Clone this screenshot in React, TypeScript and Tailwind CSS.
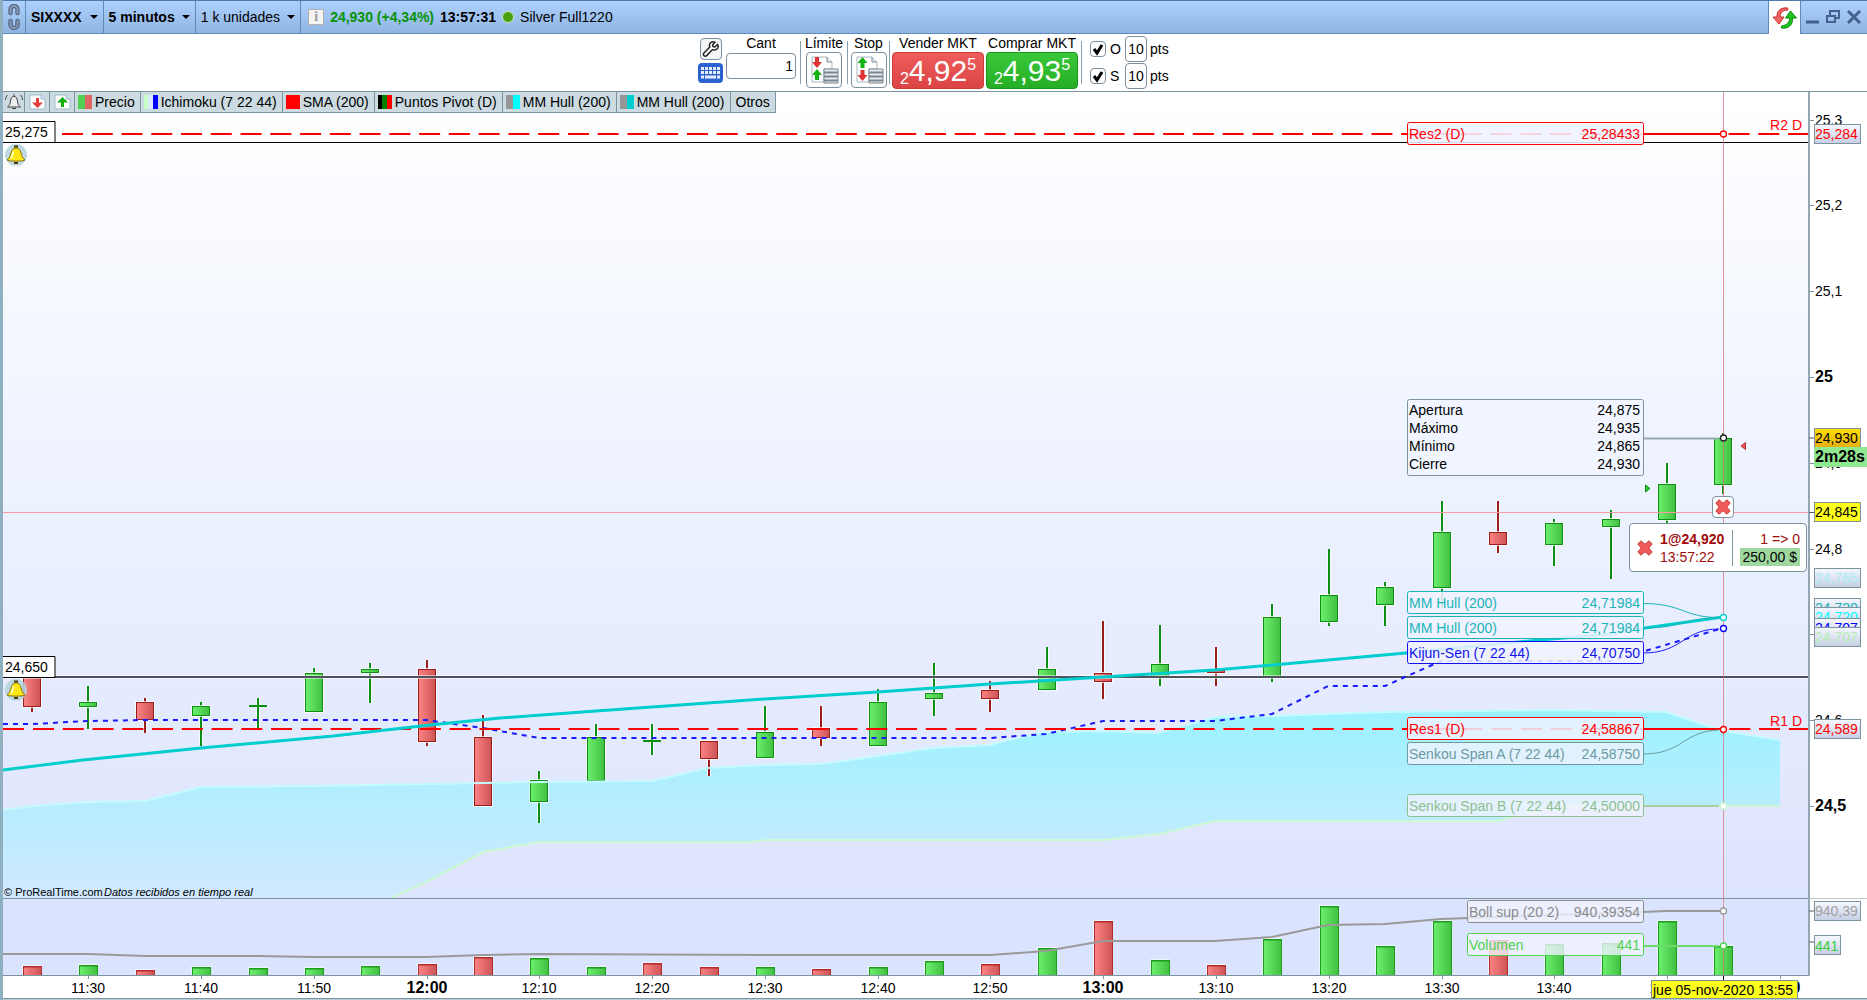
import React, { useState } from 'react';

type Candle = [up: boolean, high: number, top: number, bottom: number, low: number, volume: number];

const FIRST_X = 32;
const STEP = 56.38;
const RIGHT = 1809;
const CURSOR_X = 1723.5;

const xAt = (i: number) => Math.round(FIRST_X + STEP * i);
const priceY = (price: number) => Math.round(377 + (25 - price) * 858);

const candles: Candle[] = [
  [false, 672, 676, 707, 712, 966],
  [true, 686, 702, 707, 729, 965],
  [false, 698, 702, 720, 733, 970],
  [true, 702, 706, 716, 746, 967],
  [true, 698, 706, 706, 729, 968],
  [true, 668, 673, 712, 712, 968],
  [true, 663, 669, 673, 703, 966],
  [false, 660, 669, 742, 746, 964],
  [false, 715, 737, 806, 806, 957],
  [true, 771, 780, 802, 823, 958],
  [true, 724, 737, 781, 781, 967],
  [true, 724, 741, 741, 755, 963],
  [false, 741, 741, 759, 776, 967],
  [true, 706, 732, 758, 758, 967],
  [false, 706, 728, 738, 746, 969],
  [true, 689, 702, 746, 746, 967],
  [true, 663, 693, 699, 716, 961],
  [false, 681, 690, 699, 712, 964],
  [true, 647, 669, 690, 690, 948],
  [false, 621, 673, 682, 699, 921],
  [true, 625, 664, 677, 686, 960],
  [false, 647, 670, 673, 686, 965],
  [true, 604, 617, 677, 682, 939],
  [true, 549, 595, 622, 626, 906],
  [true, 582, 587, 605, 626, 946],
  [true, 501, 532, 588, 608, 921],
  [false, 501, 532, 545, 553, 940],
  [true, 519, 523, 545, 566, 944],
  [true, 510, 519, 527, 579, 943],
  [true, 463, 484, 520, 524, 921],
  [true, 433, 438, 485, 494, 946],
];

// volume bars that closed the other way round from their candle
const redVolumes = [11];

const spanA =
  '3,810 32,806 88,802 145,801 201,787 313,786 426,784 539,782 652,781 708,768 765,765 821,764 878,756 933,748 990,745 1000,742 1046,732 1103,731 1159,733 1215,717 1272,716 1385,712 1553,710 1666,712 1723,731 1780,740';
const spanB = '391,898 426,882 483,852 539,842 752,842 765,840 1103,840 1159,834 1215,821 1498,821 1553,806 1780,806';
const kijun =
  '3,724 32,724 88,721 145,720 426,720 483,728 539,738 990,738 1046,734 1103,721 1215,721 1272,714 1328,686 1385,686 1441,661 1610,661 1645,651 1723,628';
const hull =
  '3,770 83,760 201,748 333,736 430,725 500,718 596,711 765,699 878,692 990,684 1103,677 1215,670 1328,660 1406,653 1540,640 1610,634 1645,628 1723,617';
const bollinger =
  '3,954 88,954 145,956 258,956 313,957 426,957 483,955 539,954 765,955 990,955 1046,951 1103,941 1215,941 1272,937 1328,925 1385,924 1441,919 1553,915 1643,912 1666,911 1723,911';

const dataLabels = [
  { name: 'Res2 (D)', value: '25,28433', x: 1407, y: 122, color: '#ff0000', opacity: 0.88 },
  { name: 'MM Hull (200)', value: '24,71984', x: 1407, y: 591, color: '#1bb4b8', opacity: 0.88 },
  { name: 'MM Hull (200)', value: '24,71984', x: 1407, y: 616, color: '#1bb4b8', opacity: 0.88 },
  { name: 'Kijun-Sen (7 22 44)', value: '24,70750', x: 1407, y: 641, color: '#1212f0', opacity: 0.88 },
  { name: 'Res1 (D)', value: '24,58867', x: 1407, y: 717, color: '#ff0000', opacity: 0.85 },
  { name: 'Senkou Span A (7 22 44)', value: '24,58750', x: 1407, y: 742, color: '#6c9a9f', opacity: 0.8 },
  { name: 'Senkou Span B (7 22 44)', value: '24,50000', x: 1407, y: 794, color: '#8fbf8f', opacity: 0.8 },
  { name: 'Boll sup (20 2)', value: '940,39354', x: 1467, y: 900, color: '#8a8a8a', opacity: 0.8 },
  { name: 'Volumen', value: '441', x: 1467, y: 933, color: '#50d250', opacity: 0.8 },
];

const ohlc = [
  ['Apertura', '24,875'],
  ['Máximo', '24,935'],
  ['Mínimo', '24,865'],
  ['Cierre', '24,930'],
];

const priceTicks = [25.3, 25.2, 25.1, 25, 24.9, 24.8, 24.7, 24.6, 24.5];

const priceTags = [
  { text: '25,284', y: 124, color: '#ff0000', fill: 'url(#tag)' },
  { text: '24,930', y: 428, color: '#000', fill: 'url(#tagOrange)' },
  { text: '24,845', y: 502, color: '#000', fill: '#ffff1e' },
  { text: '24,765', y: 568, color: '#a9ecf5', fill: 'url(#tag)' },
  { text: '24,720', y: 598, color: '#1bb4b8', fill: 'url(#tag)' },
  { text: '24,720', y: 607, color: '#00ffff', fill: 'url(#tag)' },
  { text: '24,707', y: 618, color: '#0000ff', fill: 'url(#tag)' },
  { text: '24,707', y: 627, color: '#b4efb4', fill: 'url(#tag)' },
  { text: '24,589', y: 719, color: '#ff0000', fill: 'url(#tag)' },
  { text: '940,39', y: 901, color: '#a0a0a0', fill: 'url(#tag)' },
];

const timeTicks = [
  '11:30', '11:40', '11:50', '12:00', '12:10', '12:20', '12:30', '12:40',
  '12:50', '13:00', '13:10', '13:20', '13:30', '13:40', '13:50', '14:00',
];

const indicators = [
  { name: 'Precio', colors: ['bg-[#50d050]', 'bg-[#e06464]'] },
  { name: 'Ichimoku (7 22 44)', colors: ['bg-[#c8ffc8]', 'bg-[#dceaff]', 'bg-[#0000ff]'] },
  { name: 'SMA (200)', colors: ['bg-[#ff0000]'] },
  { name: 'Puntos Pivot (D)', colors: ['bg-black', 'bg-[#008000]', 'bg-[#ff0000]'] },
  { name: 'MM Hull (200)', colors: ['bg-[#969696]', 'bg-[#00ffff]'] },
  { name: 'MM Hull (200)', colors: ['bg-[#969696]', 'bg-[#00cdcd]'] },
];

const Caret = () => <span className="h-0 w-0 border-x-4 border-t-4 border-x-transparent border-t-black" />;

const Cross: React.FC<{ className?: string }> = ({ className }) => (
  <svg viewBox="0 0 16 16" className={className} aria-hidden="true">
    <path
      d="M4 .8 8 4.2 12 .8 15.2 4 11.8 8l3.4 4-3.2 3.2L8 11.8l-4 3.4L.8 12l3.4-4L.8 4z"
      fill="#f05a5a"
      stroke="#c83c3c"
    />
  </svg>
);

const TitleBar: React.FC = () => (
  <header className="flex h-[34px] items-stretch border-t border-b border-t-[#4f78ae] border-b-[#5f88bc] bg-gradient-to-b from-[#aed1ff] to-[#90b5e2]">
    <button type="button" aria-label="Vincular" className="flex w-[23px] items-center justify-center border-r border-[#5f88bc]">
      <svg width="14" height="26" viewBox="0 0 14 26" fill="none">
        <path d="M3.500 9V5.500a3.500 3.500 0 0 1 7 0V9M3.500 17v3.500a3.500 3.500 0 0 0 7 0V17" stroke="#566a86" strokeWidth="4.500" strokeLinecap="round" />
        <path d="M3.500 9V5.500a3.500 3.500 0 0 1 7 0V9M3.500 17v3.500a3.500 3.500 0 0 0 7 0V17" stroke="#8398b4" strokeWidth="2" strokeLinecap="round" />
        <path d="M7 6v4M7 16v4" stroke="#a9c4ea" strokeWidth="1" />
      </svg>
    </button>
    <button type="button" className="flex items-center gap-2 border-r border-[#5f88bc] px-[5px] font-bold">
      SIXXXX
      <Caret />
    </button>
    <button type="button" className="flex items-center gap-[7px] border-r border-[#5f88bc] px-[5px] font-bold">
      5 minutos
      <Caret />
    </button>
    <button type="button" className="flex items-center gap-[7px] border-r border-[#5f88bc] px-[5px]">
      1 k unidades
      <Caret />
    </button>
    <div className="flex flex-1 items-center gap-[6px] pl-[7px]">
      <span className="flex h-4 w-4 items-center justify-center border border-[#b0b0b0] bg-[#f3f3f3] font-[Liberation_Serif,serif] text-sm font-bold text-[#9a9a9a]">
        i
      </span>
      <span className="font-bold text-[#089408]">24,930 (+4,34%)</span>
      <span className="font-bold">13:57:31</span>
      <span className="h-3 w-3 rounded-full border border-[#cde9b4] bg-[#46a010]" />
      <span>Silver Full1220</span>
    </div>
    <button type="button" aria-label="Cambiar" className="-mb-px flex w-[33px] items-center justify-center border-x border-[#5f88bc] bg-white">
      <svg width="26" height="24" viewBox="0 0 26 24">
        <path d="M15.500 2C9 1 4.500 5 5 11H1l6 7 5-7H8.500C8 7 10 4 16 4z" fill="#f26464" stroke="#c83232" />
        <path d="M9.500 22c7 1 11.500-3 11-10h4l-6-7-5 7h4c.3 4-2 7-8 8z" fill="#1fc41f" stroke="#0c8a0c" />
      </svg>
    </button>
    <div className="flex w-[66px] items-center gap-[7px] pl-[5px] text-[#42618c]">
      <button type="button" aria-label="Minimizar">
        <svg width="13" height="14"><path d="M0 12h13" stroke="currentColor" strokeWidth="3" /></svg>
      </button>
      <button type="button" aria-label="Restaurar">
        <svg width="14" height="14" fill="none" stroke="currentColor">
          <path d="M4 5V1h9v7h-3" strokeWidth="2" />
          <path d="M1 6h8v6H1z" strokeWidth="2" />
        </svg>
      </button>
      <button type="button" aria-label="Cerrar">
        <svg width="14" height="14"><path d="m1 1 12 12M13 1 1 13" stroke="currentColor" strokeWidth="3" /></svg>
      </button>
    </div>
  </header>
);

const Divider = () => <span className="mt-[7px] h-[43px] w-px shrink-0 bg-[#8a9eae]" />;

const OrderIcon: React.FC<{ flip?: boolean }> = ({ flip }) => (
  <svg width="32" height="32" viewBox="0 0 32 32">
    <path d="M4 3h15l5 5v7h-8v13H4z" fill="#fff" stroke="#a9b9c4" />
    <path d="M19 3v5h5" fill="#e4ebef" stroke="#7d8c96" />
    {flip ? (
      <>
        <path d="M9.500 3 4.500 9h3v5h4V9h3z" fill="#12b312" />
        <path d="M9.500 27l-5-6h3v-5h4v5h3z" fill="#e03232" />
      </>
    ) : (
      <>
        <path d="M9 14 4 8h3V3h4v5h3z" fill="#e03232" />
        <path d="M9 15l-5 6h3v5h4v-5h3z" fill="#12b312" />
      </>
    )}
    <path d="M16 15h14v14H16z" fill="#e8ecee" stroke="#77858f" />
    <path d="M16 18.500h14M16 22.500h14M16 26.500h14" stroke="#77858f" strokeWidth="2" />
  </svg>
);

const LevelRow: React.FC<{ letter: string; name: string }> = ({ letter, name }) => {
  const [checked, setChecked] = useState(true);
  return (
    <div className="flex h-[27px] items-center">
      <label className="flex w-[35px] items-center gap-1">
        <span className="relative h-4 w-4">
          <input
            type="checkbox"
            checked={checked}
            onChange={() => setChecked(!checked)}
            className="block h-4 w-4 appearance-none rounded-sm border border-[#7d8f9c] bg-white"
          />
          {checked && (
            <svg viewBox="0 0 16 16" className="pointer-events-none absolute inset-0">
              <path d="m4 8 3 4 5-8" fill="none" stroke="#000" strokeWidth="3" />
            </svg>
          )}
        </span>
        {letter}
      </label>
      <input
        aria-label={name}
        defaultValue="10"
        className="h-[26px] w-[22px] rounded-sm border border-[#7d8f9c] bg-white text-center"
      />
      <span className="ml-[3px]">pts</span>
    </div>
  );
};

const OrderToolbar: React.FC = () => (
  <div className="flex h-[57px] items-start bg-white pl-[695px] leading-4">
    <div className="mt-1 flex flex-col items-center gap-[3px]">
      <button type="button" aria-label="Configurar" className="flex h-[22px] w-[22px] items-center justify-center rounded-sm border border-[#7d8f9c] bg-[#f4f6f7]">
        <svg width="18" height="18" viewBox="0 0 18 18">
          <path
            d="M15.500 4.500 13 7l-2-.5L10.500 5 13 2.300C11 1.300 8.500 2 7.700 4c-.4 1-.3 2 .1 3L2 13c-1 1-.6 2 0 2.600.8.700 1.800.8 2.700 0l5.800-6C13 10.500 15.300 9.500 16 7.500c.3-1 .1-2.200-.5-3z"
            fill="#fff"
            stroke="#222"
            strokeWidth="1.500"
          />
        </svg>
      </button>
      <button type="button" aria-label="Teclado" className="flex h-5 w-[25px] items-center justify-center rounded-sm bg-[#2c62d0]">
        <svg width="21" height="14" viewBox="0 0 21 14" stroke="#e4edff" strokeWidth="3">
          <path d="M1 2.500h19M1 6.500h19" strokeDasharray="3 1" />
          <path d="M1 11h3M5 11h11M17 11h3" />
        </svg>
      </button>
    </div>
    <label className="ml-[3px] mt-[1px] flex w-[70px] flex-col gap-[2px] text-center">
      <span>Cant</span>
      <input defaultValue="1" className="h-[26px] w-full rounded-sm border border-[#7d8f9c] bg-white pr-[2px] text-right" />
    </label>
    <div className="ml-1 flex"><Divider /></div>
    <div className="mt-[1px] flex w-[46px] flex-col items-center gap-[1px]">
      <span>Límite</span>
      <button type="button" aria-label="Orden límite" className="flex h-9 w-9 items-center justify-center rounded-sm border border-[#7d8f9c] bg-white">
        <OrderIcon />
      </button>
    </div>
    <Divider />
    <div className="mt-[1px] flex w-[41px] flex-col items-center gap-[1px]">
      <span>Stop</span>
      <button type="button" aria-label="Orden stop" className="flex h-9 w-9 items-center justify-center rounded-sm border border-[#7d8f9c] bg-white">
        <OrderIcon flip />
      </button>
    </div>
    <Divider />
    <div className="ml-[2px] mt-[1px] flex w-[92px] flex-col gap-px text-center">
      <span>Vender MKT</span>
      <button type="button" className="flex h-[37px] items-center justify-center rounded-sm border border-[#c83c3c] bg-gradient-to-b from-[#ee5c5c] to-[#dc4444] text-white">
        <span className="mt-4 text-base">2</span>
        <span className="text-3xl">4,92</span>
        <span className="-mt-3 text-base">5</span>
      </button>
    </div>
    <div className="ml-[2px] mt-[1px] flex w-[92px] flex-col gap-px text-center">
      <span className="whitespace-nowrap">Comprar MKT</span>
      <button type="button" className="flex h-[37px] items-center justify-center rounded-sm border border-[#1c961c] bg-gradient-to-b from-[#3ac83a] to-[#25ae25] text-white">
        <span className="mt-4 text-base">2</span>
        <span className="text-3xl">4,93</span>
        <span className="-mt-3 text-base">5</span>
      </button>
    </div>
    <div className="ml-[3px] flex"><Divider /></div>
    <div className="ml-2 mt-px flex flex-col">
      <LevelRow letter="O" name="Objetivo" />
      <LevelRow letter="S" name="Stop de protección" />
    </div>
  </div>
);

const Legend: React.FC = () => (
  <div className="absolute top-0 left-0 flex h-[22px] border-y border-[#7d939e] bg-[#cbdbe1]">
    <button type="button" aria-label="Alertas" className="flex w-[22px] items-center justify-center border-r border-[#7d939e]">
      <svg width="20" height="18" viewBox="0 0 20 18" fill="none" stroke="#444">
        <path d="M3.500 14c2.500-2 2.500-3 3-6S8 3.500 10 3.500 13 5 13.500 8s.5 4 3 6z" fill="#eee" />
        <path d="M10 1v2.500M8 15.500h4M3.500 2C2 3.500 1.500 5 1.500 7M16.500 2c1.500 1.500 2 3 2 5" />
      </svg>
    </button>
    {['#e63c3c', '#0faf0f'].map((color, i) => (
      <button key={color} type="button" aria-label={i === 0 ? 'Vender' : 'Comprar'} className="flex w-[25px] items-center justify-center border-r border-[#7d939e]">
        <svg width="17" height="16" viewBox="0 0 17 16">
          <path d="M1 1h11l4 4v10H1z" fill="#fff" stroke="#9db8cc" />
          <path d="M12 1v4h4" fill="#dbe8f2" stroke="#9db8cc" />
          <path d={i === 0 ? 'M8.500 14 3 8.500h4V4h3v4.500h4z' : 'M8.500 3 3 8.500h4V13h3V8.500h4z'} fill={color} />
        </svg>
      </button>
    ))}
    {indicators.map((item, i) => (
      <button key={i} type="button" className="flex items-center gap-[3px] border-r border-[#7d939e] pr-[5px] pl-[3px]">
        <span className="flex h-[14px] w-[14px]">
          {item.colors.map((c) => (
            <span key={c} className={`flex-1 ${c}`} />
          ))}
        </span>
        <span>{item.name}</span>
      </button>
    ))}
    <button type="button" className="border-r border-[#7d939e] px-[5px]">Otros</button>
  </div>
);

const AlarmBell: React.FC<{ y: number }> = ({ y }) => (
  <g transform={`translate(16 ${y})`}>
    <circle r="11" fill="#b4d2dd" fillOpacity="0.85" />
    <path d="M-9 5C-5 2-6-1-4-4.500-3-6.500-1.500-7 0-7s3 .5 4 2.500C6-1 5 2 9 5c0 1.500-18 1.500-18 0z" fill="#ffe614" stroke="#8a7000" />
    <path d="M-2-8.500h4M-2 8h4" stroke="#4a3c00" strokeWidth="2" />
    <path d="M-2.500-3.500C-3.500 0-4 2-5 3.500" stroke="#fffbb0" strokeWidth="2" fill="none" />
  </g>
);

const Chart: React.FC = () => (
  <svg viewBox="3 91 1864 907" className="block h-auto w-full" fontSize="14" role="img" aria-label="Silver Full1220">
    <defs>
      <linearGradient id="sky" x1="0" y1="0" x2="0" y2="1">
        <stop offset="0" stopColor="#ffffff" />
        <stop offset="0.500" stopColor="#edf2ff" />
        <stop offset="1" stopColor="#dde4fd" />
      </linearGradient>
      <linearGradient id="cloud" gradientUnits="userSpaceOnUse" x1="0" y1="710" x2="0" y2="898">
        <stop offset="0" stopColor="#9cf2ff" />
        <stop offset="1" stopColor="#d0e8ff" />
      </linearGradient>
      <linearGradient id="up">
        <stop offset="0" stopColor="#6cf06c" />
        <stop offset="1" stopColor="#42bf42" />
      </linearGradient>
      <linearGradient id="down">
        <stop offset="0" stopColor="#fc8484" />
        <stop offset="1" stopColor="#cc5454" />
      </linearGradient>
      <linearGradient id="tag" x1="0" y1="0" x2="0" y2="1">
        <stop offset="0" stopColor="#f6f8ff" />
        <stop offset="1" stopColor="#c6cfe4" />
      </linearGradient>
      <linearGradient id="tagOrange" x1="0" y1="0" x2="0" y2="1">
        <stop offset="0" stopColor="#ffe000" />
        <stop offset="1" stopColor="#e8ae10" />
      </linearGradient>
    </defs>

    <rect x="2" y="91" width="1865" height="907" fill="#fff" />
    <rect x="2" y="92" width="1807" height="806" fill="url(#sky)" />
    <rect x="2" y="899" width="1807" height="76" fill="#dae4ff" />

    <polygon points={`${spanA} 1780,806 1553,806 1498,821 1215,821 1159,834 1103,840 765,840 752,842 539,842 483,852 426,882 391,898 3,898`} fill="url(#cloud)" />

    {candles.map(([up, high, top, bottom, low, volume], i) => {
      const x = xAt(i);
      const redVolume = !up || redVolumes.includes(i);
      const ink = up ? '#0a8f14' : '#9c1c1c';
      return (
        <g key={i}>
          <path d={`M${x} ${high}V${low}`} stroke="#fff" strokeOpacity="0.700" strokeWidth="4" />
          <path d={`M${x} ${high}V${low}`} stroke={ink} strokeWidth="2" />
          <rect x={x - 10} y={top - 1} width="20" height={bottom - top + 2} fill="#fff" fillOpacity="0.700" />
          {bottom === top ? (
            <path d={`M${x - 9} ${top}h18`} stroke={ink} strokeWidth="2" />
          ) : (
            <rect x={x - 8.5} y={top + 0.5} width="17" height={bottom - top - 1} fill={up ? 'url(#up)' : 'url(#down)'} stroke={ink} />
          )}
          <rect x={x - 10} y={volume - 1} width="20" height={975 - volume} fill="#fff" fillOpacity="0.600" />
          <rect
            x={x - 8.5}
            y={volume + 0.5}
            width="18"
            height={975 - volume}
            fill={redVolume ? 'url(#down)' : 'url(#up)'}
            stroke={redVolume ? '#b42d2d' : '#1b9e1b'}
          />
          <path d={`M${x - 8} ${volume + 1}h17`} stroke={redVolume ? '#b42d2d' : '#1b9e1b'} />
        </g>
      );
    })}

    <g fill="none">
      <polyline points={spanA} stroke="#c4fbff" strokeWidth="2" />
      <polyline points={spanB} stroke="#ccf9d4" strokeWidth="2" />
      <path d={`M2 142.500H${RIGHT}`} stroke="#000" />
      <path d={`M2 677H${RIGHT}`} stroke="#fff" strokeWidth="4" strokeOpacity="0.500" />
      <path d={`M2 677H${RIGHT}`} stroke="#50525e" strokeWidth="2" />
      <polyline points={kijun} stroke="#1a1aff" strokeWidth="2" strokeDasharray="5 5" />
      <path d={`M62 134H${RIGHT}M3 729h21M33 729H${RIGHT}`} stroke="#ff0000" strokeWidth="2" strokeDasharray="21 8.760" />
      <path d="M1643 134h80M1643 729h80" stroke="#ff0000" strokeWidth="2" />
      <polyline points={hull} stroke="#00cdcd" strokeWidth="3" />
      <polyline points={bollinger} stroke="#9a9a9a" strokeWidth="2" />
      <path d="M2 512.500H1809" stroke="#fa9aa2" />
      <path d="M1643 438.500h76" stroke="#96aab6" strokeWidth="2" />
      <path d="M1643 603.500c40 0 40 14 76 14M1643 628c40 0 40-10 76-10" stroke="#1bb4b8" />
      <path d="M1643 653c40 0 40-24 76-24" stroke="#1a1aff" />
      <path d="M1643 754c40 0 40-23 76-24" stroke="#6c9a9f" />
      <path d="M1643 806h76" stroke="#a5cfa5" strokeWidth="2" />
      <path d="M1643 946h76" stroke="#68dc68" strokeWidth="2" />
    </g>

    <path d={`M${CURSOR_X} 92V975`} stroke="#d96b78" strokeOpacity="0.700" />
    <g fill="#fff" strokeWidth="1.300">
      <circle cx="1723.500" cy="134" r="3" stroke="#ff0000" />
      <circle cx="1723.500" cy="438" r="3" stroke="#222" />
      <circle cx="1723.500" cy="617.500" r="3" stroke="#00cdcd" />
      <circle cx="1723.500" cy="628.500" r="3" stroke="#0000ff" />
      <circle cx="1723.500" cy="729.500" r="3" stroke="#ff0000" />
      <circle cx="1723.500" cy="806" r="3" stroke="#ccf9d4" />
      <circle cx="1723.500" cy="911" r="3" stroke="#9a9a9a" />
      <circle cx="1723.500" cy="946" r="3" stroke="#50d250" />
    </g>
    <path d="M1645.500 485v7l4.500-3.500z" fill="#35c835" stroke="#0a8f14" />
    <path d="M1745.500 442.500v7l-4.500-3.500z" fill="#f05a5a" stroke="#b42d2d" />

    {dataLabels.map((l, i) => (
      <g key={i} fill={l.color}>
        <rect x={l.x + 0.5} y={l.y + 0.5} width={1643 - l.x} height="22" rx="2" fill="#f0f2ff" fillOpacity={l.opacity} stroke={l.color} />
        <text x={l.x + 2} y={l.y + 17}>{l.name}</text>
        <text x="1640" y={l.y + 17} textAnchor="end">{l.value}</text>
      </g>
    ))}
    <rect x="1407.500" y="399.500" width="236" height="76" rx="2" fill="#f1f5ff" stroke="#7d939e" />
    {ohlc.map(([name, value], i) => (
      <g key={name}>
        <text x="1409" y={415 + i * 18}>{name}</text>
        <text x="1640" y={415 + i * 18} textAnchor="end">{value}</text>
      </g>
    ))}

    <text x="1802" y="130" textAnchor="end" fill="#ff0000">R2 D</text>
    <text x="1802" y="726" textAnchor="end" fill="#ff0000">R1 D</text>

    {[
      { text: '25,275', y: 121 },
      { text: '24,650', y: 656 },
    ].map((level) => (
      <g key={level.text}>
        <path d={`M2 ${level.y + 0.5}h53v21H2`} fill="#fff" stroke="#000" />
        <text x="5" y={level.y + 16}>{level.text}</text>
        <AlarmBell y={level.y + 34} />
      </g>
    ))}

    <text x="4" y="896" fontSize="11">© ProRealTime.com</text>
    <text x="104" y="896" fontSize="11" fontStyle="italic">Datos recibidos en tiempo real</text>

    <g stroke="#7d939e">
      <path d="M2 91.500h1865M2 975.500h1807" />
      <path d="M2 898.500h1807" />
      <path d="M1809 898.500h58" strokeOpacity="0.500" />
      <path d="M1809 92V976" stroke="#93a7b3" strokeWidth="2" />
    </g>

    {priceTicks.map((p) => {
      const major = p === 25 || p === 24.5;
      return (
        <g key={p}>
          <path d={`M1810 ${priceY(p) + 0.5}h4`} stroke="#7d939e" />
          <text x="1815" y={priceY(p) + 5} fontSize={major ? 16 : 14} fontWeight={major ? 'bold' : 'normal'}>
            {String(p).replace('.', ',')}
          </text>
        </g>
      );
    })}
    <path d="M1809 438h5M1809 512.500h5M1809 911h5M1809 942h5" stroke="#556" />
    {priceTags.map((tag, i) => (
      <g key={i}>
        <rect x="1814.500" y={tag.y + 0.5} width="46" height="19" fill={tag.fill} stroke="#7d939e" />
        <text x="1815" y={tag.y + 15} fill={tag.color}>{tag.text}</text>
      </g>
    ))}
    <rect x="1814.500" y="935.500" width="26" height="19" fill="url(#tag)" stroke="#7d939e" />
    <text x="1815" y="951" fill="#3ccd3c">441</text>
    <rect x="1814" y="447" width="53" height="20" fill="#90e890" />
    <text x="1815" y="462" fontSize="16" fontWeight="bold">2m28s</text>

    {timeTicks.map((t, i) => {
      const x = xAt(i * 2 + 1);
      const hour = t.endsWith(':00');
      return (
        <g key={t}>
          <path d={`M${x + 0.5} 976v3`} stroke="#7d939e" />
          <text x={x} y="993" textAnchor="middle" fontSize={hour ? 16 : 14} fontWeight={hour ? 'bold' : 'normal'}>
            {t}
          </text>
        </g>
      );
    })}
    <path d="M1723.500 976v4" stroke="#000" />
    <rect x="1651.500" y="980.500" width="146" height="18" fill="#ffff1e" stroke="#7d8f9c" />
    <text x="1653" y="995">jue 05-nov-2020 13:55</text>
  </svg>
);

const OrderPopup: React.FC = () => (
  <>
    <button
      type="button"
      aria-label="Cerrar posición"
      className="absolute top-[405px] right-[133px] flex h-[22px] w-[22px] items-center justify-center rounded-sm border border-[#7d939e] bg-white"
    >
      <Cross className="h-4 w-4" />
    </button>
    <div className="absolute top-[432px] right-[60px] flex h-[49px] w-[178px] items-center rounded-sm border border-[#7d939e] bg-white pr-[6px] pl-[7px] leading-[18px]">
      <button type="button" aria-label="Eliminar orden">
        <Cross className="h-4 w-4" />
      </button>
      <div className="ml-[7px] w-[72px] text-[#a00a0a]">
        <div className="font-bold">1@24,920</div>
        <div>13:57:22</div>
      </div>
      <div className="h-9 w-px bg-[#7d939e]" />
      <div className="flex flex-1 flex-col items-end">
        <span className="text-[#a00a0a]">1 =&gt; 0</span>
        <span className="bg-[#9fd89f] px-[3px]">250,00 $</span>
      </div>
    </div>
  </>
);

const App: React.FC = () => (
  <div className="flex min-h-screen flex-col border-l-[3px] border-[#8fb0c0] bg-[#b9cdd6] font-['Liberation_Sans',Arial,sans-serif] text-[14px] text-black">
    <TitleBar />
    <OrderToolbar />
    <main className="relative">
      <Chart />
      <Legend />
      <OrderPopup />
    </main>
    <footer className="min-h-[2px] border-t border-[#7d939e]" />
  </div>
);

export default App;
